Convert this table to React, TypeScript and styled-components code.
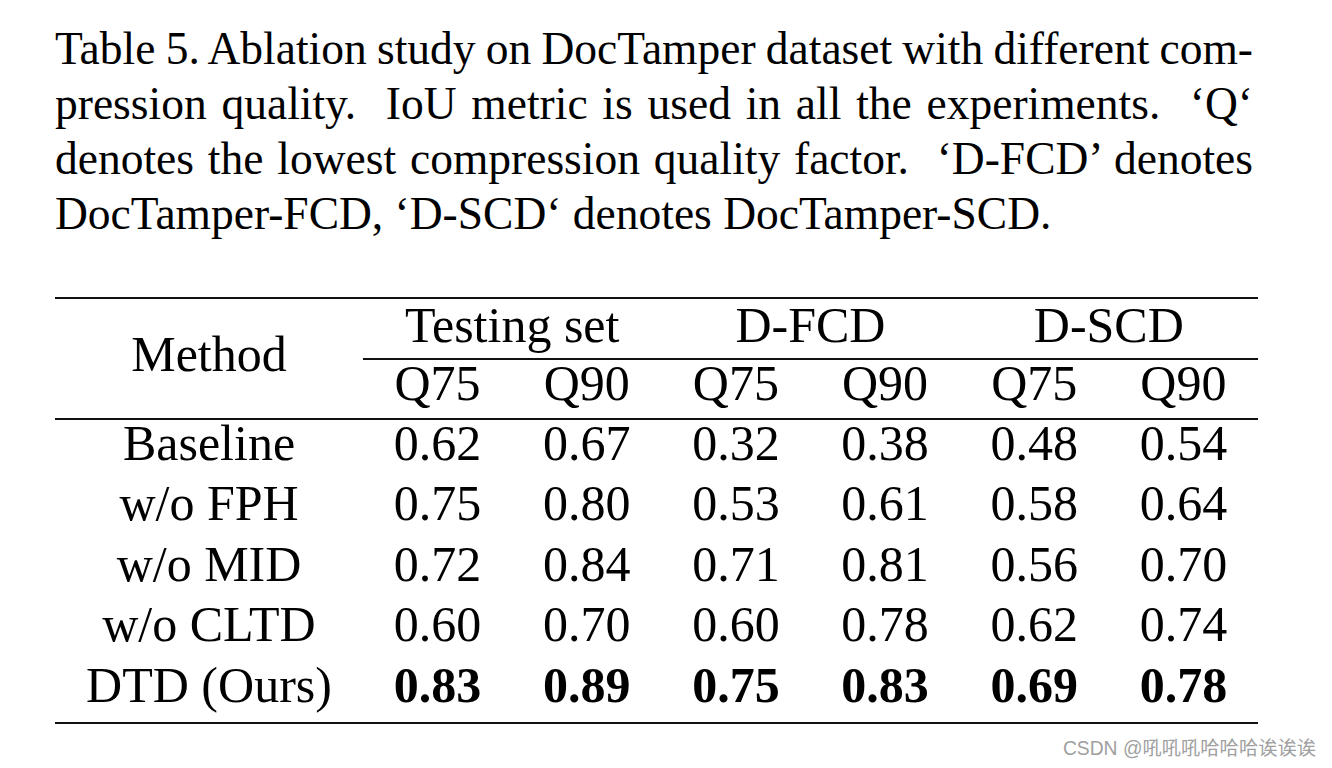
import React from "react";
import styled, { createGlobalStyle } from "styled-components";

const Global = createGlobalStyle`
  html, body { margin: 0; padding: 0; background: #ffffff; }
  body { width: 1332px; height: 768px; overflow: hidden; }
`;

const Page = styled.div`
  width: 1332px;
  height: 768px;
  box-sizing: border-box;
  padding: 21px 0 0 55px;
  display: flex;
  flex-direction: column;
  font-family: "Liberation Serif", "Times New Roman", serif;
  color: #000;
`;

const Caption = styled.div`
  width: 1198px;
  font-size: 45.5px;
  line-height: 55px;
`;

const CaptionLine = styled.div<{ $last?: boolean }>`
  white-space: nowrap;
  word-spacing: ${(p) => (p.$last ? "0" : "-3px")};
  text-align: ${(p) => (p.$last ? "left" : "justify")};
  text-align-last: ${(p) => (p.$last ? "left" : "justify")};
`;

const Table = styled.table`
  margin-top: 56px;
  width: 1203px;
  table-layout: fixed;
  border-collapse: separate;
  border-spacing: 0;
  font-size: 50px;
`;

const Rule = "2px solid #111";

const HeadCell = styled.th<{ $top?: boolean; $bottom?: boolean; $lh: number; $pb: number }>`
  font-weight: normal;
  text-align: center;
  vertical-align: middle;
  padding: 0 0 ${(p) => p.$pb}px 0;
  line-height: ${(p) => p.$lh}px;
  white-space: nowrap;
  border-top: ${(p) => (p.$top ? Rule : "none")};
  border-bottom: ${(p) => (p.$bottom ? Rule : "none")};
`;

const Cell = styled.td<{ $bold?: boolean; $last?: boolean }>`
  text-align: center;
  vertical-align: top;
  padding: 0 0 14.4px 0;
  line-height: 46px;
  white-space: nowrap;
  font-weight: ${(p) => (p.$bold ? 700 : 400)};
  border-bottom: ${(p) => (p.$last ? Rule : "none")};
`;

const Footer = styled.div`
  width: 1261px;
  display: flex;
  justify-content: flex-end;
  margin-top: 13px;
`;

const Watermark = styled.span`
  font-family: "Liberation Sans", Arial, "Noto Sans CJK SC", sans-serif;
  font-size: 19.3px;
  line-height: 24px;
  color: #a0a0a0;
`;

type Row = { name: string; vals: string[]; bold?: boolean };

const rows: Row[] = [
  { name: "Baseline", vals: ["0.62", "0.67", "0.32", "0.38", "0.48", "0.54"] },
  { name: "w/o FPH", vals: ["0.75", "0.80", "0.53", "0.61", "0.58", "0.64"] },
  { name: "w/o MID", vals: ["0.72", "0.84", "0.71", "0.81", "0.56", "0.70"] },
  { name: "w/o CLTD", vals: ["0.60", "0.70", "0.60", "0.78", "0.62", "0.74"] },
  { name: "DTD (Ours)", vals: ["0.83", "0.89", "0.75", "0.83", "0.69", "0.78"], bold: true },
];

const groups = ["Testing set", "D-FCD", "D-SCD"];

export default function App() {
  return (
    <>
      <Global />
      <Page>
        <Caption>
          <CaptionLine>Table 5. Ablation study on DocTamper dataset with different com-</CaptionLine>
          <CaptionLine>pression quality.&nbsp; IoU metric is used in all the experiments.&nbsp; ‘Q‘</CaptionLine>
          <CaptionLine>denotes the lowest compression quality factor.&nbsp; ‘D-FCD’ denotes</CaptionLine>
          <CaptionLine $last>DocTamper-FCD, ‘D-SCD‘ denotes DocTamper-SCD.</CaptionLine>
        </Caption>
        <Table>
          <colgroup>
            <col style={{ width: 308 }} />
            {Array.from({ length: 6 }).map((_, i) => (
              <col key={i} />
            ))}
          </colgroup>
          <thead>
            <tr>
              <HeadCell rowSpan={2} $top $bottom $lh={52} $pb={9}>
                Method
              </HeadCell>
              {groups.map((g) => (
                <HeadCell key={g} colSpan={2} $top $bottom $lh={52} $pb={7}>
                  {g}
                </HeadCell>
              ))}
            </tr>
            <tr>
              {groups.flatMap((g) =>
                ["Q75", "Q90"].map((q) => (
                  <HeadCell key={g + q} $bottom $lh={46} $pb={12}>
                    {q}
                  </HeadCell>
                ))
              )}
            </tr>
          </thead>
          <tbody>
            {rows.map((r, ri) => {
              const last = ri === rows.length - 1;
              return (
                <tr key={r.name}>
                  <Cell $last={last}>{r.name}</Cell>
                  {r.vals.map((v, vi) => (
                    <Cell key={vi} $bold={r.bold} $last={last}>
                      {v}
                    </Cell>
                  ))}
                </tr>
              );
            })}
          </tbody>
        </Table>
        <Footer>
          <Watermark>CSDN @吼吼吼哈哈哈诶诶诶</Watermark>
        </Footer>
      </Page>
    </>
  );
}
